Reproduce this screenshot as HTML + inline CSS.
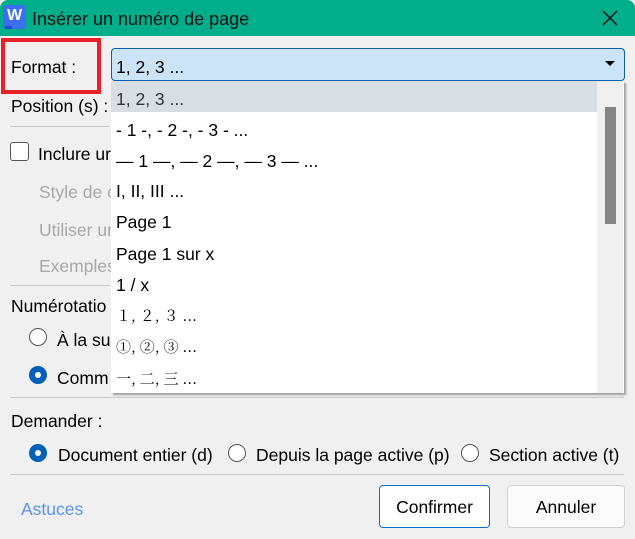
<!DOCTYPE html>
<html><head><meta charset="utf-8"><style>
*{margin:0;padding:0;box-sizing:border-box}
body{width:635px;height:539px;background:#f0f0f0;font-family:"Liberation Sans","Noto Sans CJK SC",sans-serif;font-size:17.5px;color:#000;position:relative;overflow:hidden}
.a{position:absolute;white-space:nowrap;line-height:20px}
.g{color:#a8a8a8}
.hr{position:absolute;height:1px;background:#c8c8c8}
.rb{position:absolute;width:18px;height:18px;border:1.5px solid #555;border-radius:50%;background:#fff}
.rc{position:absolute;width:18px;height:18px;border-radius:50%;background:#005fb8}
.rc:after{content:"";position:absolute;left:6px;top:6px;width:6px;height:6px;border-radius:50%;background:#fff}
.it{position:absolute;left:116px;line-height:20px;white-space:nowrap}
</style></head><body>
<div style="position:absolute;left:0;top:0;width:635px;height:36px;background:#00ae8c;border-radius:8px 8px 0 0"></div>
<div style="position:absolute;left:3px;top:5px;width:23px;height:24px;background:#3b6ff0;border-radius:3px;color:#fff;font-weight:bold;font-size:16px;text-align:center;line-height:22px">W</div>
<div style="position:absolute;left:5px;top:26px;width:7px;height:3px;background:#1f4fc8"></div>
<div class="a" style="left:32px;top:9px;font-size:18px;color:#111">Insérer un numéro de page</div>
<svg style="position:absolute;left:602px;top:10px" width="16" height="16"><path d="M1 1L15 15M15 1L1 15" stroke="#111" stroke-width="1.5"/></svg>

<div style="position:absolute;left:1px;top:38px;width:100px;height:56px;border:4px solid #e8202a"></div>
<div class="a" style="left:11px;top:57px">Format :</div>
<div style="position:absolute;left:111px;top:48px;width:514px;height:33px;background:#cce4f7;border:1px solid #0a5fb0;border-radius:4px"></div>
<div class="a" style="left:116px;top:57px">1, 2, 3 ...</div>
<svg style="position:absolute;left:604px;top:60px" width="12" height="8"><path d="M1 1H11L6 6Z" fill="#000"/></svg>

<div class="a" style="left:11px;top:96px">Position (s) :</div>
<div class="hr" style="left:10px;top:126px;width:100px"></div>
<div style="position:absolute;left:10px;top:142px;width:19px;height:19px;border:1.5px solid #555;border-radius:3px;background:#fff"></div>
<div class="a" style="left:38px;top:144px">Inclure ur</div>
<div class="a g" style="left:39px;top:182px">Style de c</div>
<div class="a g" style="left:39px;top:220px">Utiliser ur</div>
<div class="a g" style="left:39px;top:256px">Exemples</div>
<div class="hr" style="left:10px;top:285px;width:100px"></div>
<div class="a" style="left:11px;top:296px">Numérotatio</div>
<div class="rb" style="left:29px;top:328px"></div>
<div class="a" style="left:57px;top:330px">À la su</div>
<div class="rc" style="left:29px;top:366px"></div>
<div class="a" style="left:57px;top:368px">Comm</div>
<div class="hr" style="left:10px;top:397px;width:614px"></div>

<div style="position:absolute;left:111px;top:81px;width:513px;height:312px;background:#fff;box-shadow:2px 2px 2px rgba(0,0,0,.35)"></div>
<div style="position:absolute;left:111px;top:81px;width:486px;height:31px;background:#d9dde4"></div>
<div style="position:absolute;left:597px;top:81px;width:26px;height:312px;background:#f0f0f0"></div>
<div style="position:absolute;left:605px;top:107px;width:11px;height:117px;background:#858585"></div>
<div class="it" style="top:89px;color:#333">1, 2, 3 ...</div>
<div class="it" style="top:120px">- 1 -, - 2 -, - 3 - ...</div>
<div class="it" style="top:151px">— 1 —, — 2 —, — 3 — ...</div>
<div class="it" style="top:181px">I, II, III ...</div>
<div class="it" style="top:212px">Page 1</div>
<div class="it" style="top:244px">Page 1 sur x</div>
<div class="it" style="top:275px">1 / x</div>
<div class="it" style="top:306px;font-family:'Noto Serif CJK SC',serif;font-size:15px">１, ２, ３ ...</div>
<div class="it" style="top:337px;font-family:'Noto Serif CJK SC',serif;font-size:15px">①, ②, ③ ...</div>
<div class="it" style="top:369px;font-family:'Noto Serif CJK SC',serif;font-size:15px">一, 二, 三 ...</div>

<div class="a" style="left:11px;top:411px">Demander :</div>
<div class="rc" style="left:29px;top:444px"></div>
<div class="a" style="left:58px;top:445px">Document entier (d)</div>
<div class="rb" style="left:228px;top:444px"></div>
<div class="a" style="left:256px;top:445px">Depuis la page active (p)</div>
<div class="rb" style="left:461px;top:444px"></div>
<div class="a" style="left:489px;top:445px">Section active (t)</div>
<div class="hr" style="left:10px;top:474px;width:614px"></div>

<div class="a" style="left:21px;top:499px;color:#5b95e8">Astuces</div>
<div style="position:absolute;left:379px;top:485px;width:111px;height:43px;background:#fff;border:1px solid #0a6cc8;border-radius:4px;text-align:center;line-height:43px">Confirmer</div>
<div style="position:absolute;left:507px;top:485px;width:118px;height:43px;background:#fbfbfb;border:1px solid #d0d0d0;border-radius:4px;text-align:center;line-height:43px">Annuler</div>
</body></html>
